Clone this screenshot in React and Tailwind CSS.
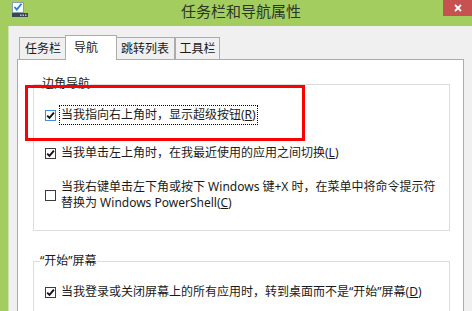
import React from "react";

const font = { fontFamily: '"Noto Sans", "Noto Sans CJK SC", sans-serif' };

const Check = ({ checked, focused }) => (
  <span
    className={`w-[11px] h-[11px] shrink-0 border bg-white flex items-center justify-center ${
      focused ? "border-[#3d8ee6]" : "border-[#3c3c3c]"
    }`}
  >
    {checked && (
      <svg width="9" height="9" viewBox="0 0 9 9">
        <path d="M1.2 4.6 L3.5 6.9 L7.9 1.6" fill="none" stroke="#111" strokeWidth="1.9" />
      </svg>
    )}
  </span>
);

const Row = ({ checked, focused, className, children }) => (
  <div className={`flex items-center pl-[11px] ${className}`}>
    <Check checked={checked} focused={focused} />
    <span
      className={`ml-[3px] px-px py-px border leading-[16px] ${
        focused ? "border-dotted border-black" : "border-transparent"
      }`}
    >
      {children}
    </span>
  </div>
);

const Tab = ({ label, active, w }) => (
  <div
    className={
      active
        ? `relative z-10 -mx-[2px] -mb-px h-[25px] ${w} bg-white border border-b-0 border-[#acacac] flex items-center pl-[8px]`
        : `h-[22px] ${w} bg-[#f0f0f0] border border-b-0 border-[#acacac] flex items-center justify-center`
    }
  >
    {label}
  </div>
);

export default function App() {
  return (
    <div
      className="relative w-[472px] h-[311px] overflow-hidden bg-[#a4cd60] flex flex-col text-[12px] text-[#1a1a1a]"
      style={font}
    >
      <div className="h-[26px] flex shrink-0">
        <div className="w-[28px] pl-[12px] pt-[2px]">
          <svg width="16" height="16" viewBox="0 0 16 16">
            <rect x="0.5" y="0.5" width="11" height="10" fill="#fbfbfb" stroke="#8a9bb0" />
            <path d="M2.5 5 L4.8 7.6 L9.5 1.8" fill="none" stroke="#2a7fd6" strokeWidth="1.8" />
            <rect x="0" y="11" width="16" height="4" fill="#3b4657" />
            <rect x="8" y="12.5" width="1.5" height="1.5" fill="#b7c2d0" />
            <rect x="10.5" y="12.5" width="1.5" height="1.5" fill="#b7c2d0" />
            <rect x="13" y="12.5" width="1.5" height="1.5" fill="#b7c2d0" />
          </svg>
        </div>
        <div className="flex-1 pl-[11px] flex items-center justify-center text-[15px] text-[#2c3626] pb-[3px]">
          任务栏和导航属性
        </div>
        <div className="w-[29px] h-[16px] bg-[#c75050] flex items-center justify-center">
          <svg width="8" height="8" viewBox="0 0 8 8">
            <path d="M1 1 L7 7 M7 1 L1 7" stroke="#fff" strokeWidth="1.8" />
          </svg>
        </div>
      </div>

      <div className="flex-1 ml-[8px] border-l border-[#cfe0b3] bg-[#f0f0f0] pt-[9px] flex flex-col">
        <div className="h-[24px] pl-[10px] flex items-end shrink-0">
          <Tab label="任务栏" w="w-[48px]" />
          <Tab label="导航" w="w-[52px]" active />
          <Tab label="跳转列表" w="w-[60px]" />
          <Tab label="工具栏" w="w-[45px]" />
        </div>

        <div className="ml-[8px] w-[447px] h-[300px] shrink-0 bg-white border border-[#acacac] pt-[16px]">
          <fieldset className="ml-[15px] w-[417px] border border-[#dcdcdc] pb-[17px]">
            <legend className="ml-[8px] leading-[16px]">边角导航</legend>
            <Row checked focused className="mt-[13px]">
              当我指向右上角时，显示超级按钮(<u>R</u>)
            </Row>
            <Row checked className="mt-[18px]">
              当我单击左上角时，在我最近使用的应用之间切换(<u>L</u>)
            </Row>
            <Row className="mt-[14px]">
              当我右键单击左下角或按下 Windows 键+X 时，在菜单中将命令提示符
              <br />
              替换为 Windows PowerShell(<u>C</u>)
            </Row>
          </fieldset>

          <fieldset className="ml-[15px] mt-[22px] w-[417px] border border-[#dcdcdc] pb-[20px]">
            <legend className="ml-[6px] leading-[16px]">“开始”屏幕</legend>
            <Row checked className="mt-[13px]">
              当我登录或关闭屏幕上的所有应用时，转到桌面而不是“开始”屏幕(<u>D</u>)
            </Row>
          </fieldset>
        </div>
      </div>

      <div className="absolute left-[25px] top-[85px] w-[280px] h-[56px] border-[3px] border-[#ff0000]" />
    </div>
  );
}
